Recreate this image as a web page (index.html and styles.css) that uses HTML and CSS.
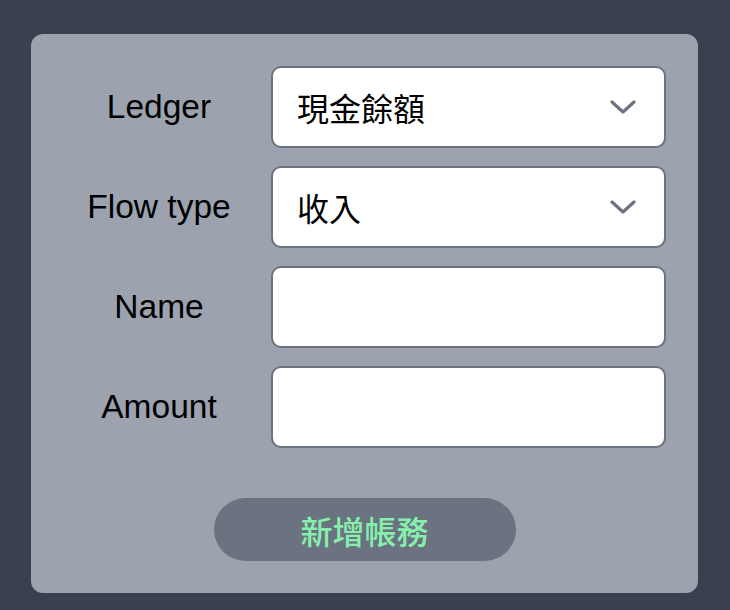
FILE: index.html
```html
<!DOCTYPE html>
<html lang="zh-Hant">
<head>
<meta charset="utf-8">
<link rel="stylesheet" href="styles.css">
</head>
<body>
<div class="card">
  <form class="form">
    <label class="label">Ledger</label>
    <div class="select">
      <span class="value">現金餘額</span>
      <svg class="chev" width="26" height="16" viewBox="0 0 26 16"><path d="M2 3 L13 13 L24 3" fill="none" stroke="#6b7280" stroke-width="3.2" stroke-linecap="round" stroke-linejoin="round"/></svg>
    </div>
    <label class="label">Flow type</label>
    <div class="select">
      <span class="value">收入</span>
      <svg class="chev" width="26" height="16" viewBox="0 0 26 16"><path d="M2 3 L13 13 L24 3" fill="none" stroke="#6b7280" stroke-width="3.2" stroke-linecap="round" stroke-linejoin="round"/></svg>
    </div>
    <label class="label">Name</label>
    <div class="input"></div>
    <label class="label">Amount</label>
    <div class="input"></div>
  </form>
  <div class="actions">
    <button class="btn" type="button">新增帳務</button>
  </div>
</div>
</body>
</html>
```
FILE: styles.css
```css
html, body {
  margin: 0;
  background: #394150;
}
body {
  padding: 34px 32px 0 31px;
  font-family: "Liberation Sans", "Noto Sans CJK TC", sans-serif;
}
.card {
  background: #9ca3af;
  border-radius: 12px;
  padding: 32px 32px 32px 32px;
}
.form {
  display: grid;
  grid-template-columns: 192px 1fr;
  column-gap: 16px;
  row-gap: 18px;
  margin: 0;
}
.label {
  display: flex;
  align-items: center;
  justify-content: center;
  font-size: 33.5px;
  color: #000;
}
.select, .input {
  box-sizing: border-box;
  height: 82px;
  background: #fff;
  border: 2px solid #6b7280;
  border-radius: 10px;
  display: flex;
  align-items: center;
  padding: 0 28px 0 24px;
}
.value {
  flex: 1;
  font-size: 32px;
  color: #000;
  font-family: "Noto Sans CJK TC", sans-serif;
}
.chev {
  display: block;
}
.actions {
  display: flex;
  justify-content: center;
  margin-top: 50px;
}
.btn {
  width: 302px;
  height: 63px;
  border: none;
  border-radius: 32px;
  background: #6b7280;
  color: #86efac;
  font-size: 32px;
  font-weight: 500;
  font-family: "Noto Sans CJK TC", sans-serif;
  padding: 0;
}
```
